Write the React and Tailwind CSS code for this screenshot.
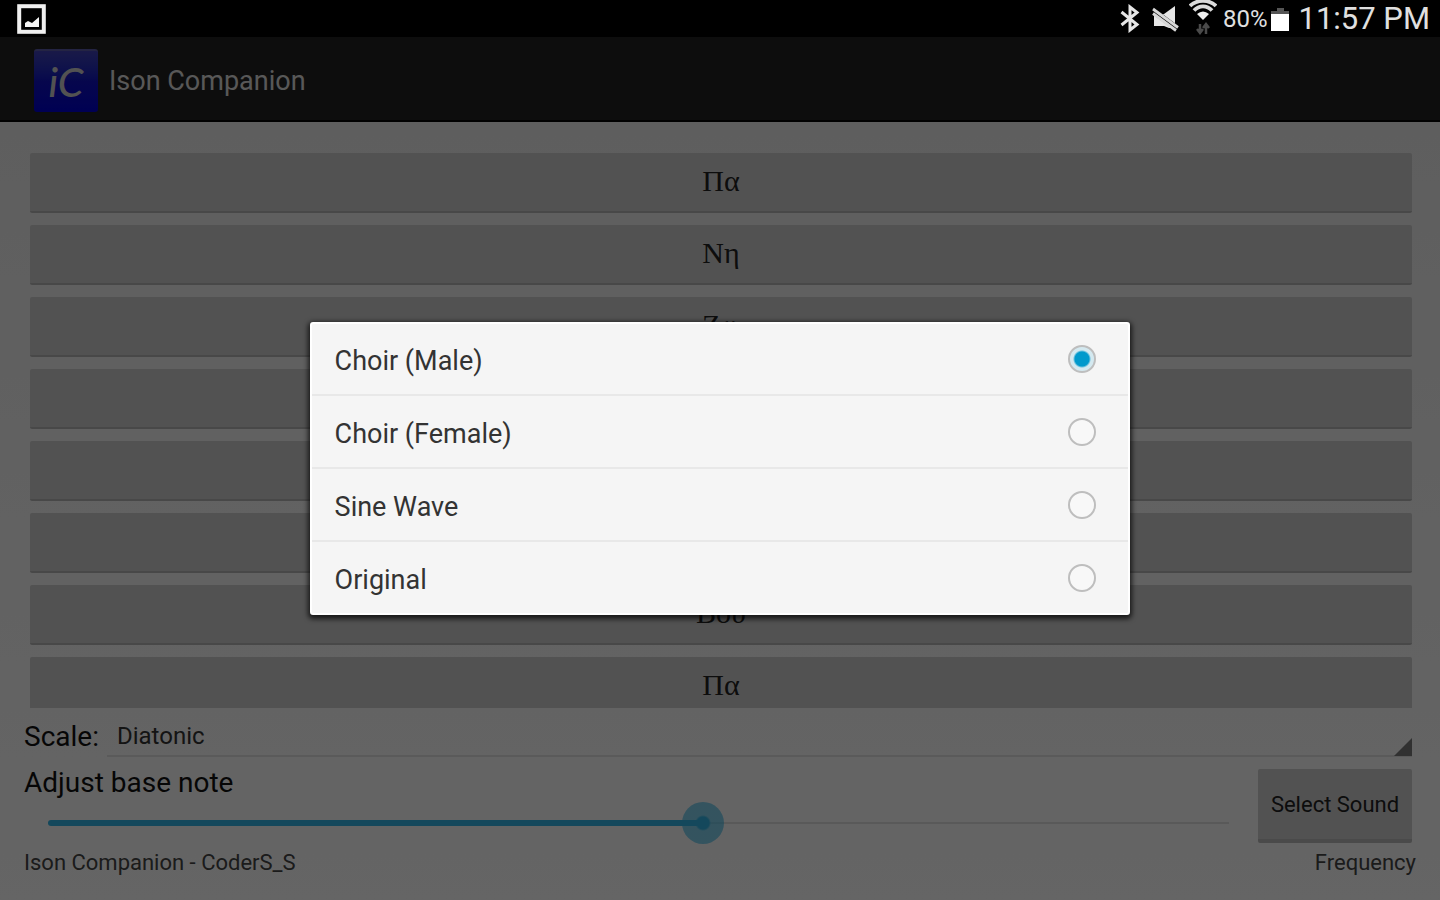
import { useState } from "react"

const notes = ["Πα", "Νη", "Ζω", "Κε", "Δι", "Γα", "Βου", "Πα"]
const scales = ["Diatonic", "Chromatic", "Enharmonic"]
const sounds = ["Choir (Male)", "Choir (Female)", "Sine Wave", "Original"]

function StatusBar() {
  return (
    <div className="flex h-[37px] shrink-0 items-center bg-black pl-[17px] pr-[10px] text-[#e0e0e0]">
      {/* Screenshot notification */}
      <svg className="h-[30px] w-[29px]" viewBox="0 0 29 30" fill="none">
        <rect x="2.2" y="2.2" width="24.6" height="25.6" stroke="#f0f0f0" strokeWidth="4" />
        <path d="M8 23v-4l3-2 4 2 7-6v10z" fill="#f5f5f5" />
      </svg>

      <div className="ml-auto flex h-full items-center">
        {/* Bluetooth */}
        <svg className="h-[29px] w-[20px]" viewBox="0 0 20 29" fill="none" stroke="#e6e6e6" strokeWidth="3">
          <path d="M1.500 8L17 20.500L10 26V3L17 8.500L1.500 21" />
        </svg>
        {/* Muted */}
        <svg className="ml-3 h-[28px] w-[28px]" viewBox="0 0 28 28">
          <path d="M2 9h10L23 1v22h-6l-5-2H2z" fill="#e6e6e6" />
          <path d="M0 5L27 25" stroke="#000" strokeWidth="6" />
          <path d="M1 4L26 22.500M1 8.500L24 25.500" stroke="#d8d8d8" strokeWidth="2.800" />
        </svg>
        {/* Wi-Fi with activity arrows */}
        <svg className="ml-[9px] h-[37px] w-[28px]" viewBox="0 0 28 37" fill="none">
          <path d="M1 6C8-.8 20-.8 27 6M5 10.500C10 5 18 5 23 10.500" stroke="#dcdcdc" strokeWidth="3.800" />
          <path d="M8 14q6-5 12 0L14 20z" fill="#f0f0f0" />
          <path d="M11 24v8M8 29l3 4 3-4M17 34v-8M14 28l3-4 3 4" stroke="#4a4a4a" strokeWidth="2.500" />
        </svg>
        <span className="ml-[6px] text-[24px] leading-8">80%</span>
        {/* Battery */}
        <svg className="ml-1 h-[26px] w-[18px]" viewBox="0 0 18 26">
          <path d="M6 2h7v3h5v3H0V5h6z" fill="#555" />
          <path d="M0 8h18v17H0z" fill="#fff" />
        </svg>
        <span className="ml-[9px] text-[31px] leading-8">11:57 PM</span>
      </div>
    </div>
  )
}

function ActionBar() {
  return (
    <header className="flex h-[85px] shrink-0 items-center border-b-2 border-black bg-[#222222] pl-[34px] pt-1">
      <div className="flex h-[63px] w-[64px] items-center justify-center rounded-[3px] border-t-2 border-[#5a5aa8] bg-linear-to-b from-[#4040b4] via-[#1010c0] to-[#0000d0] font-['Lato'] text-[41px] font-medium italic leading-none text-[#cccccc]">
        iC
      </div>
      <h1 className="ml-[11px] text-[27px] leading-8 text-[#dcdcdc]">Ison Companion</h1>
    </header>
  )
}

function SoundDialog({ sound, onSelect }) {
  return (
    <div className="absolute inset-0 flex items-center justify-center bg-black/60">
      <div
        role="dialog"
        aria-label="Select Sound"
        className="w-[57%] divide-y-2 divide-[#e8e8e8] rounded-[3px] border-2 border-white bg-[#f5f5f5] shadow-[0_2px_5px_2px_rgba(0,0,0,0.7)]"
      >
        {sounds.map((name) => (
          <label key={name} className="flex h-[73px] items-center justify-between pl-[23px] pr-8 text-[27px] leading-8 text-[#333333] first:h-[72px] last:h-[71px]">
            <span className="pt-1">{name}</span>
            <input
              type="radio"
              name="sound"
              checked={sound === name}
              onChange={() => onSelect(name)}
              className="size-[28px] appearance-none rounded-full border-2 border-[#bebebe] bg-[#f8f8f8] checked:bg-[radial-gradient(circle,#0099cc_7px,#d4e9f0_9px)]"
            />
          </label>
        ))}
      </div>
    </div>
  )
}

export default function App() {
  const [sound, setSound] = useState("Choir (Male)")
  const [scale, setScale] = useState("Diatonic")
  const [base, setBase] = useState(555)

  return (
    <div className="flex h-screen flex-col overflow-hidden font-['Roboto',sans-serif]">
      <StatusBar />
      <div className="relative flex min-h-0 flex-1 flex-col bg-linear-to-b from-[#eaeaea] to-[#fcfcfc]">
        <ActionBar />

        <main className="flex min-h-0 flex-1 flex-col pt-[31px]">
          {/* Notes */}
          <div className="flex min-h-0 flex-1 flex-col gap-3 overflow-hidden pl-[30px] pr-7">
            {notes.map((note, i) => (
              <button
                key={i}
                className="h-[60px] shrink-0 rounded-[2px] border-b-2 border-[#b4b4b4] bg-[#cdcdcd] pb-[2px] font-['Liberation_Serif',serif] text-[30px] leading-8 text-[#222222]"
              >
                {note}
              </button>
            ))}
          </div>

          {/* Scale */}
          <div className="flex h-[49px] shrink-0 items-center pl-6 pr-7">
            <label htmlFor="scale" className="pt-2 text-[28px] leading-8 text-[#111111]">
              Scale:
            </label>
            <div className="relative ml-2 h-full flex-1 border-b-2 border-[#e0e0e0]">
              <select
                id="scale"
                value={scale}
                onChange={(e) => setScale(e.target.value)}
                className="h-full w-full appearance-none bg-transparent pl-[10px] pt-2 text-[24px] text-[#333333]"
              >
                {scales.map((s) => (
                  <option key={s}>{s}</option>
                ))}
              </select>
              <svg className="pointer-events-none absolute -bottom-px right-0 size-[18px]" viewBox="0 0 18 18">
                <path d="M18 0v18H0z" fill="#7a7a7a" />
              </svg>
            </div>
          </div>

          {/* Base note */}
          <div className="flex shrink-0 items-start pl-6 pr-7 pt-3">
            <div className="flex-1">
              <label htmlFor="base" className="block text-[28px] leading-7 text-[#111111]">
                Adjust base note
              </label>
              <div className="relative ml-[3px] mr-2 mt-[5px] h-[42px]">
                <div className="absolute inset-x-[21px] top-[20px] h-[2px] bg-[#dedede]">
                  <div className="relative -top-[2px] h-[6px] rounded-full bg-[#33b5e5]" style={{ width: `${base / 10}%` }} />
                </div>
                <input
                  id="base"
                  type="range"
                  min="0"
                  max="1000"
                  value={base}
                  onChange={(e) => setBase(Number(e.target.value))}
                  className="relative block h-[42px] w-full appearance-none bg-transparent [&::-webkit-slider-thumb]:size-[42px] [&::-webkit-slider-thumb]:appearance-none [&::-webkit-slider-thumb]:rounded-full [&::-webkit-slider-thumb]:bg-[radial-gradient(circle,#33b5e5_6px,rgba(51,181,229,0.6)_8px)]"
                />
              </div>
            </div>
            <button className="h-[74px] w-[154px] rounded-[2px] border-b-4 border-[#b9b9b9] bg-[#cdcdcd] pt-[2px] text-[22px] leading-8 text-[#222222]">
              Select Sound
            </button>
          </div>

          <footer className="flex h-[56px] shrink-0 justify-between px-6 pt-[3px] text-[22px] leading-8 text-[#444444]">
            <span>Ison Companion - CoderS_S</span>
            <span>Frequency</span>
          </footer>
        </main>

        <SoundDialog sound={sound} onSelect={setSound} />
      </div>
    </div>
  )
}
